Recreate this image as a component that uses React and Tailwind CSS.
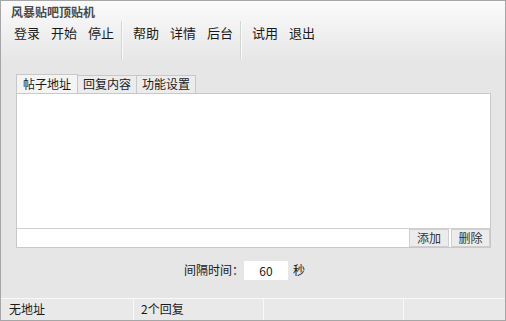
const FONT = { fontFamily: '"Noto Sans CJK SC", "Microsoft YaHei", sans-serif' }

const GROUPS = [
  ['登录', '开始', '停止'],
  ['帮助', '详情', '后台'],
  ['试用', '退出'],
]

const TABS = ['帖子地址', '回复内容', '功能设置']

export default function App() {
  return (
    <div
      className="w-[506px] h-[321px] flex flex-col border border-[#a6a6a6] bg-[#e6e6e6] text-[#1a1a1a] overflow-hidden"
      style={FONT}
    >
      <div className="bg-gradient-to-b from-[#fbfbfb] to-[#e6e6e6] h-[60px] flex flex-col">
        <div className="pl-[10px] pt-[3px] h-[20px] text-[12px] leading-[16px] font-bold text-[#4a4a4a]">
          风暴贴吧顶贴机
        </div>
        <div className="flex h-[39px] items-stretch pl-[13px]">
          {GROUPS.map((g, gi) => (
            <div key={gi} className="flex items-stretch">
              {gi > 0 ? (
                <div className="w-[2px] ml-[7px] mr-[10px] border-l border-[#d4d4d4] bg-[#fbfbfb] h-[38px]" />
              ) : null}
              <div className="flex gap-[11px] pt-[4px] text-[13px] leading-[16px]">
                {g.map((t) => (
                  <span key={t}>{t}</span>
                ))}
              </div>
            </div>
          ))}
        </div>
      </div>

      <div className="ml-[15px] mr-[14px] mt-[13px] flex flex-col">
        <div className="flex h-[19px] items-end text-[12px] leading-[16px]">
          {TABS.map((t, i) => (
            <div
              key={t}
              className={
                i === 0
                  ? 'h-[19px] px-[6px] pt-[1px] border border-b-0 border-[#c8c8c8] bg-[#f4f4f4]'
                  : 'h-[18px] px-[5px] border border-b-0 border-l-0 border-[#c8c8c8] bg-[#ececec]'
              }
            >
              {t}
            </div>
          ))}
        </div>
        <div className="h-[155px] flex flex-col border border-[#c8c8c8] bg-white">
          <div className="flex-1 border-b border-[#d0d0d0]" />
          <div className="h-[18px] flex justify-end gap-[2px] text-[12px] leading-[16px]">
            <div className="w-[40px] text-center border border-[#cfcfcf] bg-[#ececec] text-[#333]">添加</div>
            <div className="w-[39px] text-center border border-[#cfcfcf] bg-[#ececec] text-[#333]">删除</div>
          </div>
        </div>
      </div>

      <div className="flex items-center mt-[12px] h-[20px] text-[12px] pl-[183px]">
        <span>间隔时间：</span>
        <div className="w-[44px] h-[19px] bg-white text-center leading-[19px] text-[12px]">60</div>
        <span className="ml-[5px]">秒</span>
      </div>

      <div className="mt-auto h-[22px] flex border-t border-[#f8f8f8] bg-[#e9e9e9] text-[12px] leading-[20px]">
        <div className="w-[133px] pl-[8px] border-r border-[#f8f8f8]">无地址</div>
        <div className="w-[130px] pl-[7px] border-r border-[#f8f8f8]">2个回复</div>
        <div className="w-[140px] border-r border-[#f8f8f8]" />
        <div className="flex-1" />
      </div>
    </div>
  )
}
